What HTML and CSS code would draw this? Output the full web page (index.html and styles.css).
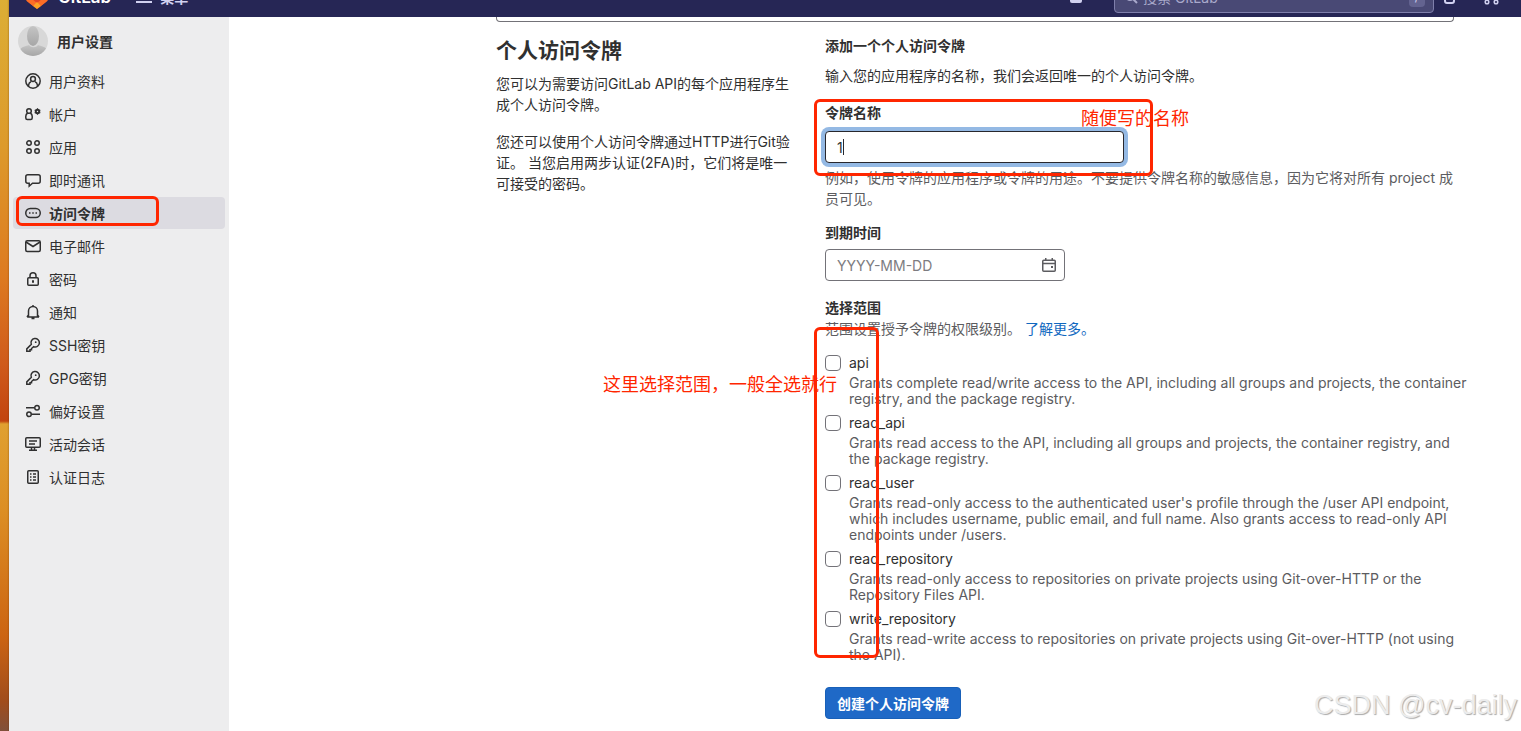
FILE: index.html
```html
<!DOCTYPE html>
<html lang="zh-CN">
<head>
<meta charset="utf-8">
<title>个人访问令牌 · GitLab</title>
<link rel="stylesheet" href="styles.css">
</head>
<body>
<div class="desktop">
  <div class="wallpaper"></div>
  <div class="app">
    <header class="topbar">
      <div class="topbar-row">
        <a class="brand" href="#">
          <svg class="logo" viewBox="0 0 24 24" width="24" height="24" aria-hidden="true">
            <path d="M1 9 4 1l3 7h10l3-7 3 8c1 3 0 6-2 8l-9 7-9-7C1 15 0 12 1 9z" fill="#e24329"/>
            <path d="M1 11c2 0 4 1 6 3l5 4-4 3-5-4c-2-1-3-4-2-6z" fill="#fc6d26"/>
            <path d="M23 11c-2 0-4 1-6 3l-5 4 4 3 5-4c2-1 3-4 2-6z" fill="#fc6d26"/>
            <path d="m12 17-4 4 4 3 4-3z" fill="#fca326"/>
          </svg>
          <span class="wordmark">GitLab</span>
        </a>
        <button class="menu" type="button">
          <svg viewBox="0 0 16 16" width="16" height="16" aria-hidden="true"><path d="M0 3h16M0 8h16M0 13h16" stroke="currentColor" stroke-width="2"/></svg>
          <span>菜单</span>
        </button>
        <div class="topbar-end">
          <button class="icon-button plus" type="button" aria-label="新建"><svg viewBox="0 0 16 16" width="16" height="16"><rect x="2" y="2" width="12" height="12" rx="2" fill="currentColor"/><path d="M8 5v6M5 8h6" stroke="#292961" stroke-width="2"/></svg></button>
          <label class="search">
            <svg viewBox="0 0 16 16" width="16" height="16" aria-hidden="true"><circle cx="7" cy="7" r="4" fill="none" stroke="currentColor" stroke-width="2"/><path d="m10 10 4 4" stroke="currentColor" stroke-width="2"/></svg>
            <input type="search" placeholder="搜索 GitLab" aria-label="搜索 GitLab">
            <kbd>/</kbd>
          </label>
          <button class="icon-button issues" type="button" aria-label="议题"><svg viewBox="0 0 16 16" width="16" height="16"><rect x="3" y="2" width="9" height="12" rx="2" fill="none" stroke="currentColor" stroke-width="2"/></svg></button>
          <button class="icon-button merges" type="button" aria-label="合并请求"><svg viewBox="0 0 16 16" width="16" height="16"><g fill="none" stroke="currentColor" stroke-width="1.5"><circle cx="3" cy="13" r="1.8"/><circle cx="12" cy="13" r="1.8"/><path d="M3 2v9M12 11V5H8"/></g></svg></button>
        </div>
      </div>
    </header>

    <div class="body">
      <nav class="sidebar" aria-label="用户设置">
        <a class="profile" href="#">
          <svg class="avatar" viewBox="0 0 30 30" width="30" height="30" aria-hidden="true">
            <defs>
              <linearGradient id="person" x1="0" y1="0" x2="0" y2="1"><stop offset="0" stop-color="#c4c4c4"/><stop offset="1" stop-color="#a6a6a6"/></linearGradient>
              <clipPath id="round"><circle cx="15" cy="15" r="15"/></clipPath>
            </defs>
            <g clip-path="url(#round)"><rect width="30" height="30" fill="#d8d8d8"/>
            <path d="M2 24c1-3 6-4 9-5 2 3 7 3 9 0 3 1 8 2 9 5l-3 6H4z" fill="url(#person)"/>
            <ellipse cx="15" cy="10" rx="6" ry="10" fill="url(#person)"/></g>
          </svg>
          <span>用户设置</span>
        </a>
        <ul class="nav">
          <li><a href="#"><svg viewBox="0 0 16 16"><circle cx="8" cy="8" r="7.2"/><circle cx="8" cy="6" r="2.4"/><path d="M3.6 13.2V12A4.4 4.4 0 0 1 6 8.6M12.4 13.2V12A4.4 4.4 0 0 0 10 8.6"/></svg>用户资料</a></li>
          <li><a href="#"><svg viewBox="0 0 16 16"><circle cx="4" cy="5" r="2.3"/><path d="M2.6 7A4 4 0 0 0 .8 10.500V12q0 1.500 1.500 1.500h3.400q1.500 0 1.500-1.500v-1.500A4 4 0 0 0 5.400 7"/><circle cx="12.500" cy="5.500" r="1.700" stroke-width="2"/><path d="M12.500 2.300v6.400M9.700 3.900l5.600 3.200M15.300 3.900 9.700 7.100" stroke-width="1.200"/><circle cx="12.500" cy="5.500" r=".7" fill="#eee" stroke="none"/></svg>帐户</a></li>
          <li><a href="#"><svg viewBox="0 0 16 16"><circle cx="4" cy="4" r="2.250"/><circle cx="12" cy="4" r="2.250"/><circle cx="4" cy="12" r="2.250"/><circle cx="12" cy="12" r="2.250"/></svg>应用</a></li>
          <li><a href="#"><svg viewBox="0 0 16 16"><path d="M2.800 2.700h10.400q2 0 2 2v4.600q0 2-2 2H7.500l-3.300 2.900v-2.900H2.800q-2 0-2-2V4.700q0-2 2-2z"/></svg>即时通讯</a></li>
          <li><a class="active" href="#" aria-current="page"><svg viewBox="0 0 16 16"><rect x=".75" y="3.500" width="14.500" height="9" rx="4.500"/><path d="M4 8h1.500M7.250 8h1.500M10.500 8H12"/></svg>访问令牌</a></li>
          <li><a href="#"><svg viewBox="0 0 16 16"><rect x=".75" y="2.750" width="14.500" height="10.800" rx="1.500"/><path d="m1 4 7 4.500L15 4"/></svg>电子邮件</a></li>
          <li><a href="#"><svg viewBox="0 0 16 16"><rect x="2.750" y="6.750" width="10.500" height="7.500" rx="1"/><path d="M5 6.500V4.800a3 3 0 0 1 6 0v1.700"/><path d="M8 9.300v2.400" stroke-width="2"/></svg>密码</a></li>
          <li><a href="#"><svg viewBox="0 0 16 16"><path d="M2 13h12M3.500 12.500V7a4.500 4.500 0 0 1 9 0v5.500M2 13l1.500-2M14 13l-1.500-2M8 1v1.500M6.500 14.500h3"/></svg>通知</a></li>
          <li><a href="#"><svg viewBox="0 0 16 16"><path d="M6.300 7.400A4.200 4.200 0 1 1 8.700 9.700L6.500 11.500v1.200H5v1.500H1.800v-2.300z"/><circle cx="10.700" cy="5.200" r=".9" fill="currentColor" stroke="none"/></svg>SSH密钥</a></li>
          <li><a href="#"><svg viewBox="0 0 16 16"><path d="M6.300 7.400A4.200 4.200 0 1 1 8.700 9.700L6.500 11.500v1.200H5v1.500H1.800v-2.300z"/><circle cx="10.700" cy="5.200" r=".9" fill="currentColor" stroke="none"/></svg>GPG密钥</a></li>
          <li><a href="#"><svg viewBox="0 0 16 16"><path d="M1 4.700h8.500M6.500 11.300H15"/><circle cx="12" cy="4.700" r="2.250"/><circle cx="4" cy="11.300" r="2.250"/></svg>偏好设置</a></li>
          <li><a href="#"><svg viewBox="0 0 16 16"><rect x=".75" y="1.750" width="14.500" height="9.500" rx="1"/><path d="M4 5h8M4 8h6M6.500 11.500v2.500M9.500 11.500v2.500M4 14.300h8"/></svg>活动会话</a></li>
          <li><a href="#"><svg viewBox="0 0 16 16"><rect x="2.750" y="1.750" width="10.500" height="12.500" rx="1"/><path d="M5 5h1.500M8 5h3M5 8h1.500M8 8h3M5 11h1.500M8 11h3"/></svg>认证日志</a></li>
        </ul>
        <div class="mark mark-nav"></div>
      </nav>

      <main class="content">
        <div class="previous-field"></div>
        <div class="row">
          <section class="intro">
            <h1>个人访问令牌</h1>
            <p>您可以为需要访问GitLab API的每个应用程序生成个人访问令牌。</p>
            <p>您还可以使用个人访问令牌通过HTTP进行Git验证。 当您启用两步认证(2FA)时，它们将是唯一可接受的密码。</p>
          </section>
          <form class="token-form">
            <h2>添加一个个人访问令牌</h2>
            <p class="lead">输入您的应用程序的名称，我们会返回唯一的个人访问令牌。</p>
            <div class="group">
              <label for="token-name">令牌名称</label>
              <div class="name-field">
                <input id="token-name" class="text-input focused" type="text" value="1">
                <span class="caret"></span>
              </div>
              <p class="help">例如，使用令牌的应用程序或令牌的用途。不要提供令牌名称的敏感信息，因为它将对所有 project 成员可见。</p>
            </div>
            <div class="group">
              <label for="expires">到期时间</label>
              <div class="date-field text-input">
                <input id="expires" type="text" placeholder="YYYY-MM-DD">
                <svg viewBox="0 0 16 16" width="16" height="16" aria-hidden="true"><g fill="none" stroke="currentColor" stroke-width="1.5"><rect x="1.750" y="3.250" width="12.500" height="11" rx="1"/><path d="M2 6.500h12M4.750 1v2.500M11.250 1v2.500"/></g><rect x="10" y="9" width="2" height="2" fill="currentColor"/></svg>
              </div>
            </div>
            <fieldset>
              <legend>选择范围</legend>
              <p class="help scope-help">范围设置授予令牌的权限级别。 <a href="#">了解更多。</a></p>
              <div class="scopes">
                <div class="scope"><input type="checkbox" id="s1"><label for="s1">api</label><p>Grants complete read/write access to the API, including all groups and projects, the container registry, and the package registry.</p></div>
                <div class="scope"><input type="checkbox" id="s2"><label for="s2">read_api</label><p>Grants read access to the API, including all groups and projects, the container registry, and the package registry.</p></div>
                <div class="scope"><input type="checkbox" id="s3"><label for="s3">read_user</label><p>Grants read-only access to the authenticated user's profile through the /user API endpoint, which includes username, public email, and full name. Also grants access to read-only API endpoints under /users.</p></div>
                <div class="scope"><input type="checkbox" id="s4"><label for="s4">read_repository</label><p>Grants read-only access to repositories on private projects using Git-over-HTTP or the Repository Files API.</p></div>
                <div class="scope"><input type="checkbox" id="s5"><label for="s5">write_repository</label><p>Grants read-write access to repositories on private projects using Git-over-HTTP (not using the API).</p></div>
              </div>
            </fieldset>
            <button class="submit" type="submit">创建个人访问令牌</button>
            <div class="mark mark-name"></div>
            <div class="note note-name">随便写的名称</div>
            <div class="mark mark-scopes"></div>
            <div class="note note-scopes">这里选择范围，一般全选就行</div>
          </form>
        </div>
      </main>
    </div>
  </div>
  <div class="watermark">CSDN @cv-daily</div>
</div>
</body>
</html>
```

FILE: styles.css
```css
* { box-sizing: border-box; }

body {
  margin: 0;
  font: 14px/21px Inter, "Noto Sans CJK SC", sans-serif;
  color: #303030;
  background: #fff;
}

h1, h2, p, ul, fieldset { margin: 0; padding: 0; }
a { color: inherit; text-decoration: none; }
button, input { font: inherit; color: inherit; }

.desktop {
  position: relative;
  display: flex;
  min-height: 100vh;
  overflow: hidden;
}

.wallpaper {
  flex: 0 0 9px;
  background:
    linear-gradient(to right, transparent 80%, rgba(90, 40, 0, 0.25)),
    linear-gradient(to bottom, #dcae35 0, #dd9a2b 20%, #dd7a20 38%, #cf5a1b 50%, #c2440f 57.6%, #e0a030 58%, #dc8e24 70%, #cc6412 87%, #a04c1c 96%, #80503a 100%);
}

.app { flex: 1; display: flex; flex-direction: column; min-width: 0; }

/* Top bar, scrolled so that only its lower part shows */
.topbar {
  display: flex;
  align-items: flex-end;
  height: 17px;
  overflow: hidden;
  background: #262655;
  color: #d1d1f0;
}
.topbar-row { display: flex; flex: 1; flex-shrink: 0; align-items: center; height: 40px; padding: 0 21px 0 16px; }
.topbar button { display: flex; align-items: center; padding: 0; border: 0; background: none; }
.brand { display: flex; align-items: center; gap: 9px; color: #fff; }
.logo { display: block; }
.wordmark { font-size: 17px; font-weight: 600; }
.menu { gap: 8px; margin-left: 25px; font-weight: 600; }
.topbar-end { display: flex; flex: 1; justify-content: flex-end; align-items: center; }
.plus { margin-right: 30px; }
.search {
  display: flex;
  align-items: center;
  gap: 4px;
  width: 320px;
  height: 32px;
  padding: 0 8px;
  border: 1px solid #7f7fab;
  border-radius: 4px;
  background: #494975;
  color: #a9a9cc;
}
.search input { flex: 1; min-width: 0; padding: 0; border: 0; outline: 0; background: none; }
.search input::placeholder { color: #a9a9cc; opacity: 1; }
.search kbd { padding: 0 6px; border-radius: 4px; background: #636390; color: #d1d1f0; font: 12px/20px Inter, sans-serif; }
.issues { margin-left: 8px; }
.merges { margin-left: 26px; }

.body { display: flex; flex: 1; }

.sidebar { position: relative; flex: 0 0 220px; padding: 9px 4px; background: #ededee; }
.profile { display: flex; align-items: center; gap: 9px; padding-left: 5px; font-weight: 600; }
.avatar { display: block; }
.nav { display: grid; gap: 1px; margin-top: 9px; list-style: none; }
.nav a {
  display: flex;
  align-items: center;
  gap: 8px;
  height: 32px;
  padding: 0 12px;
  border-radius: 4px;
}
.nav svg { width: 16px; height: 16px; fill: none; stroke: #303030; stroke-width: 1.5; }
.nav .active { background: #dcdbe1; font-weight: 600; }

.content { flex: 1; min-width: 0; max-width: 1225px; padding-left: 267px; }
.previous-field { height: 5px; border: 1px solid #737278; border-top: 0; border-radius: 0 0 4px 4px; }
.row { display: flex; gap: 30px; }
.intro { flex: 0 0 299px; padding-top: 15px; }
.intro h1 { margin-bottom: 8px; font-size: 21px; line-height: 28px; font-weight: 600; }
.intro p { margin-bottom: 16px; }

.token-form { position: relative; flex: 1; min-width: 0; padding-top: 13px; }
.token-form h2 { margin-bottom: 9px; font-size: 14px; line-height: 21px; font-weight: 600; }
.lead { margin-bottom: 17px; }
.group { margin-bottom: 14px; }
.group label { display: block; margin-bottom: 6px; line-height: 20px; font-weight: 600; }
.name-field { position: relative; padding-top: 2px; }
.text-input {
  display: block;
  height: 32px;
  padding: 0 11px;
  border: 1px solid #737278;
  border-radius: 4px;
  background: #fff;
}
.focused { width: 299px; border-color: #28272d; outline: 0; box-shadow: 0 0 0 4px #94b9e4; }
.caret { position: absolute; left: 18px; top: 10px; width: 1px; height: 16px; background: #28272d; }
.help { margin-top: 4px; color: #5c5c60; }
.date-field { display: flex; align-items: center; width: 240px; padding-right: 7px; color: #5c5c60; }
.date-field input { flex: 1; min-width: 0; padding: 0; border: 0; outline: 0; }
.date-field input::placeholder { color: #7d7c81; opacity: 1; }

fieldset { min-width: 0; margin-top: 16px; border: 0; }
legend { padding: 0; font-weight: 600; }
.scope-help { margin-top: 0; }
.help a { color: #1068bf; }
.scopes { display: grid; gap: 8px; margin-top: 16px; margin-right: -16px; }
.scope { display: grid; grid-template-columns: 16px 1fr; gap: 4px 8px; line-height: 16px; }
.scope input {
  appearance: none;
  width: 16px;
  height: 16px;
  margin: 0;
  border: 1px solid #737278;
  border-radius: 4px;
  background: #fff;
}
.scope p { grid-column: 2; color: #5c5c60; }

.submit {
  height: 32px;
  margin-top: 24px;
  padding: 0 11px;
  border: 1px solid #1860b8;
  border-radius: 4px;
  background: #1f69c7;
  color: #fff;
  font-weight: 600;
}

/* Hand-drawn annotations over the page */
.mark { position: absolute; border: 3px solid #ff2600; border-radius: 6px; pointer-events: none; }
.mark-nav { left: 7px; top: 179px; width: 143px; height: 30px; }
.mark-name { left: -11px; top: 77px; width: 339px; height: 77px; }
.mark-scopes { left: -11px; top: 305px; width: 65px; height: 331px; }
.note { position: absolute; color: #ff2600; font-size: 18px; line-height: 24px; white-space: nowrap; }
.note-name { left: 256px; top: 85px; }
.note-scopes { left: -222px; top: 351px; }

.watermark {
  position: absolute;
  right: 4px;
  bottom: 8px;
  color: #ececec;
  font: 27px/36px "Liberation Sans", Arial, sans-serif;
  text-shadow: 1px 1px 1px #aaa;
}
```
